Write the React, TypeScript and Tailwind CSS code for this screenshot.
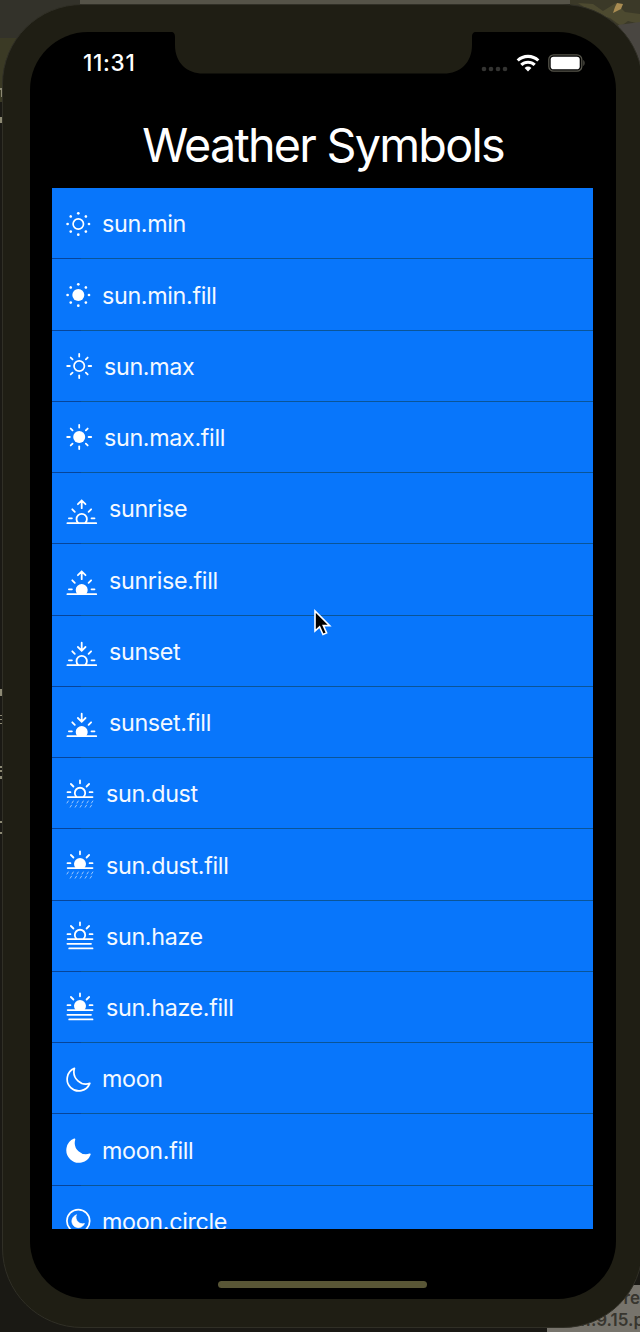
import type { ReactNode } from "react";

const ring = (cx: number, cy: number, fill: boolean) => (
  <circle cx={cx} cy={cy} r={fill ? 6 : 5.2} fill={fill ? "currentColor" : "none"} stroke={fill ? "none" : "currentColor"} strokeWidth={1.7} />
);

function SunMin({ fill = false }) {
  const dots = [0, 45, 90, 135, 180, 225, 270, 315];
  return (
    <>
      {ring(12.3, 18, fill)}
      {dots.map((a) => (
        <circle key={a} cx={23} cy={18} r={1.35} fill="currentColor" stroke="none" transform={`rotate(${a} 12.3 18)`} />
      ))}
    </>
  );
}

function SunMax({ fill = false }) {
  const rays = [0, 45, 90, 135, 180, 225, 270, 315];
  return (
    <>
      {ring(13.2, 18, fill)}
      {rays.map((a) => (
        <path key={a} d="M22.6 18h2.6" transform={`rotate(${a} 13.2 18)`} />
      ))}
    </>
  );
}

function Horizon({ fill = false, down = false }) {
  return (
    <>
      <path d="M1.4 32.2h28.8" />
      {fill ? (
        <path d="M11.2 32a6 6 0 1 1 9 0Z" fill="currentColor" stroke="none" />
      ) : (
        <path d="M12.1 31.8a5.2 5.2 0 1 1 7.2 0" />
      )}
      <path d="M2.9 27.3h3M25.5 27.3h3M6.3 18.3l2.5 2.5M25.1 18.3l-2.5 2.5" />
      {down ? <path d="M15.7 9.7v8M11.9 14l3.8 3.8 3.8-3.8" /> : <path d="M15.7 17.2V9.6M11.9 13.2l3.8-3.8 3.8 3.8" />}
    </>
  );
}

function HalfSun({ fill = false }) {
  return (
    <>
      <path d="M1.7 21.1h24.8" />
      {fill ? (
        <path d="M9.6 21a6 6 0 1 1 8.8 0Z" fill="currentColor" stroke="none" />
      ) : (
        <path d="M10.3 20.6a5.2 5.2 0 1 1 7.4 0" />
      )}
      <path d="M14 4.5v2.8M4.9 8l2.5 2.5M23.1 8l-2.5 2.5M1.5 16.2h2.9M23.6 16.2h2.9" />
    </>
  );
}

function SunDust({ fill = false }) {
  return (
    <>
      <HalfSun fill={fill} />
      <path
        opacity={0.6}
        strokeWidth={1}
        d="M1 27l1.300-2M6 27l1.300-2M11 27l1.300-2M16 27l1.300-2M21 27l1.300-2M25.500 27l1.300-2M4.200 31.200l1.300-2M9.200 31.200l1.300-2M14.200 31.200l1.300-2M19.200 31.200l1.300-2M24.200 31.200l1.300-2"
      />
    </>
  );
}

function SunHaze({ fill = false }) {
  return (
    <>
      <HalfSun fill={fill} />
      <path d="M1.4 25.8h23.6M3.2 30.4h23.3" />
    </>
  );
}

function Moon({ fill = false }) {
  return (
    <path
      d="M8.4 7.4A11.7 11.7 0 1 0 23.8 22.4C15.5 25.4 5.6 17.5 8.4 7.4Z"
      fill={fill ? "currentColor" : "none"}
      strokeLinejoin="round"
      strokeWidth={1.7}
    />
  );
}

function MoonCircle() {
  return (
    <>
      <circle cx={12.3} cy={18} r={11.4} strokeWidth={1.7} />
      <path d="M10.2 12A6.500 6.500 0 1 0 18.400 20.500C13.800 22 8.600 17.800 10.200 12Z" fill="currentColor" strokeWidth={0.7} />
    </>
  );
}

type Row = { name: string; icon: ReactNode; size: string };

const rows: Row[] = [
  { name: "sun.min", icon: <SunMin />, size: "w-9" },
  { name: "sun.min.fill", icon: <SunMin fill />, size: "w-9" },
  { name: "sun.max", icon: <SunMax />, size: "w-[38px]" },
  { name: "sun.max.fill", icon: <SunMax fill />, size: "w-[38px]" },
  { name: "sunrise", icon: <Horizon />, size: "w-[43px]" },
  { name: "sunrise.fill", icon: <Horizon fill />, size: "w-[43px]" },
  { name: "sunset", icon: <Horizon down />, size: "w-[43px]" },
  { name: "sunset.fill", icon: <Horizon fill down />, size: "w-[43px]" },
  { name: "sun.dust", icon: <SunDust />, size: "w-10" },
  { name: "sun.dust.fill", icon: <SunDust fill />, size: "w-10" },
  { name: "sun.haze", icon: <SunHaze />, size: "w-10" },
  { name: "sun.haze.fill", icon: <SunHaze fill />, size: "w-10" },
  { name: "moon", icon: <Moon />, size: "w-9" },
  { name: "moon.fill", icon: <Moon fill />, size: "w-9" },
  { name: "moon.circle", icon: <MoonCircle />, size: "w-9" },
];

function SymbolRow({ name, icon, size }: Row) {
  return (
    <li className="flex h-[71.25px] shrink-0 flex-col">
      <div className="flex min-h-0 flex-1 items-center pt-px pl-3.5">
        <div className={`${size} shrink-0 text-white`}>
          <svg width="34" height="36" viewBox="0 0 34 36" fill="none" stroke="currentColor" strokeWidth="1.8" strokeLinecap="round">
            {icon}
          </svg>
        </div>
        <span className="pt-px text-[23.3px] leading-none tracking-[-0.33px]">{name}</span>
      </div>
      <div className="flex h-px shrink-0">
        <div className="w-[29px] bg-[#06459a]" />
        <div className="flex-1 bg-[#0a5598]" />
      </div>
    </li>
  );
}

function StatusBar() {
  return (
    <div className="flex h-[62px] items-center justify-between pr-[30px] pl-[53px]">
      <span className="text-[22.5px] leading-none font-medium tracking-[0.7px]">11:31</span>
      <div className="flex items-center">
        <svg width="28" height="8" viewBox="0 0 28 8" className="mt-3 mr-[7px]" fill="#343432">
          <circle cx="3" cy="4" r="2.3" />
          <circle cx="10" cy="4" r="2.3" />
          <circle cx="17" cy="4" r="2.3" />
          <circle cx="24" cy="4" r="2.3" />
        </svg>
        <svg width="24" height="18" viewBox="0 0 24 18" className="mr-2" fill="none" stroke="white" strokeWidth="3.1">
          <path d="M1.7 6.5a14.800 14.800 0 0 1 20.600 0" />
          <path d="M5.300 10.900a9.600 9.600 0 0 1 13.400 0" />
          <path d="M12 17.600l-3.400-3.700a4.900 4.900 0 0 1 6.800 0Z" fill="white" stroke="none" />
        </svg>
        <svg width="38" height="18" viewBox="0 0 38 18">
          <rect x="0.8" y="0.8" width="33" height="16.400" rx="4.800" fill="none" stroke="#55544a" strokeWidth="1.300" />
          <rect x="2.700" y="2.800" width="29" height="12.400" rx="2.800" fill="white" />
          <path d="M35.300 6v6c1.700-.8 1.700-5.200 0-6Z" fill="#55544a" />
        </svg>
      </div>
    </div>
  );
}

function Desktop() {
  return (
    <>
      <div className="absolute inset-x-0 top-0 h-1 bg-[#555348]" />
      <div className="absolute top-0 left-0 h-[38px] w-20 bg-[#33322a]" />
      <div className="absolute top-[38px] left-0 h-16 w-10 bg-[#3b3a25]" />
      <svg className="absolute top-0 left-0" width="2" height="900" viewBox="0 0 2 900" fill="#8d8a74">
        <path d="M0 88h2v2H0ZM1 90h1v7H1ZM0 117h2v6H0ZM0 689h2v7H0ZM0 715h2v1H0ZM0 719h2v1H0ZM0 723h2v1H0ZM0 766h2v2H0ZM0 770h2v2H0ZM0 776h2v3H0ZM0 821h2v2H0ZM0 832h2v2H0Z" />
      </svg>
      <svg className="absolute top-0 right-0" width="70" height="72" viewBox="0 0 70 72">
        <path fill="#3b3928" d="M0 0h70v72H0Z" />
        <path fill="#4d4a30" d="M8 3l15 1 10 7 13-8 9 9 15 2v10l-12-3-7 5-11-8-14-3Z" />
        <path fill="#a98c52" d="M47 3l6 1-2 5-8 4 2-6Z" />
        <path fill="#494641" d="M48 25l22-3v50L55 50Z" />
      </svg>
      <div className="absolute right-0 bottom-0 flex h-[47px] w-[93px] flex-col items-end justify-center overflow-hidden bg-[#77746c] font-semibold text-[#38362f]">
        <span className="text-[17px] leading-[22px]">re</span>
        <span className="-mr-1 text-[17px] leading-[22px] whitespace-nowrap">...9.15.p</span>
      </div>
    </>
  );
}

export default function App() {
  return (
    <div className="relative h-[1332px] w-[640px] overflow-hidden bg-[#1a1914] font-['Inter',sans-serif] text-white">
      <Desktop />
      <div className="relative mt-1 ml-0.5 h-[1324px] w-[641px] rounded-[80px] border border-[#302f26] bg-[#1f1e14] pt-[27px] pl-[27px]">
        <main className="relative flex h-[1267px] w-[586px] flex-col rounded-[58px] bg-black">
          <svg className="absolute top-0 left-[141px]" width="305" height="42" viewBox="0 0 305 42" fill="#1f1e14">
            <path d="M0 0c3 0 4 2 4 5v8c0 18 12 28.500 28 28.500h241c16 0 28-10.500 28-28.500V5c0-3 1-5 4-5Z" />
          </svg>
          <StatusBar />
          <h1 className="mt-[27px] flex h-[67px] items-start justify-center text-[46.700px] leading-[48px] font-normal tracking-[-1.75px]">
            Weather Symbols
          </h1>
          <ul className="ml-[22px] flex h-[1041px] w-[541px] flex-col overflow-hidden bg-[#0876fb] text-[#f4f9ff]">
            {rows.map((row) => (
              <SymbolRow key={row.name} {...row} />
            ))}
          </ul>
          <div className="mt-[52px] ml-[188px] h-[7px] w-[209px] rounded-full bg-[#595636]" />
        </main>
      </div>
      <svg className="absolute top-[608px] left-[313px]" width="20" height="30" viewBox="0 0 20 30">
        <path d="M2 3v20l4.600-4.200 3.400 7.700 3.600-1.600-3.300-7.300h6.400Z" fill="black" stroke="white" strokeWidth="1.600" />
      </svg>
    </div>
  );
}
